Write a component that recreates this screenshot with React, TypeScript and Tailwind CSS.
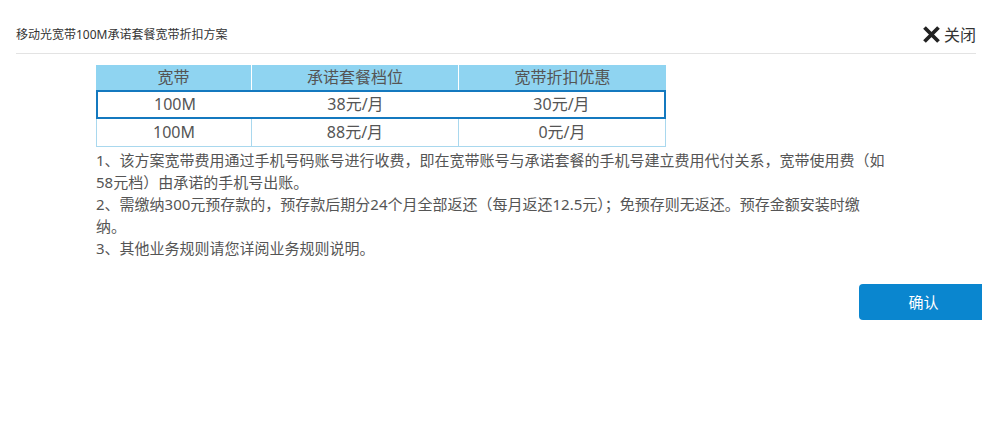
import React from 'react';

const rows = [
  { bw: '100M', level: '38元/月', discount: '30元/月', active: true },
  { bw: '100M', level: '88元/月', discount: '0元/月', active: false },
];

const App = () => {
  return (
    <div className="w-[982px] h-[429px] bg-white overflow-hidden text-[#555] font-['Noto_Sans','Noto_Sans_CJK_SC',sans-serif]">
      {/* header */}
      <div className="ml-[16px] mr-[6px] h-[54px] pt-[16px] flex items-center justify-between border-b border-[#e3e3e3]">
        <span className="text-[12px] leading-[18px] text-[#333]">移动光宽带100M承诺套餐宽带折扣方案</span>
        <button className="flex items-center text-[16px] leading-[20px] text-[#333]">
          <svg width="19" height="19" viewBox="0 0 19 19" className="mr-[3px]">
            <path d="M2.5 2.5 L16.5 16.5 M16.5 2.5 L2.5 16.5" stroke="#222" strokeWidth="3.8" strokeLinecap="butt" />
          </svg>
          关闭
        </button>
      </div>

      {/* table */}
      <div className="ml-[96px] mt-[11px] w-[570px] text-[16px]">
        <div className="flex h-[25px] bg-[#8fd4f1] leading-[25px] text-center">
          <div className="w-[156px] border-r border-white">宽带</div>
          <div className="w-[207px] border-r border-white">承诺套餐档位</div>
          <div className="flex-1">宽带折扣优惠</div>
        </div>
        {rows.map((r) =>
          r.active ? (
            <div key={r.level} className="flex h-[29px] border-2 border-[#1479bf] text-center leading-[25px]">
              <div className="w-[154px]">{r.bw}</div>
              <div className="w-[207px]">{r.level}</div>
              <div className="flex-1">{r.discount}</div>
            </div>
          ) : (
            <div key={r.level} className="flex h-[28px] border-x border-b border-[#a9d8ee] text-center leading-[27px]">
              <div className="w-[155px] border-r border-[#a9d8ee]">{r.bw}</div>
              <div className="w-[207px] border-r border-[#a9d8ee]">{r.level}</div>
              <div className="flex-1">{r.discount}</div>
            </div>
          )
        )}
      </div>

      {/* notes */}
      <div className="ml-[96px] mt-[2px] text-[15px] leading-[22px] text-[#555]">
        <p>
          1、该方案宽带费用通过手机号码账号进行收费，即在宽带账号与承诺套餐的手机号建立费用代付关系，宽带使用费（如
          <br />
          58元档）由承诺的手机号出账。
        </p>
        <p>
          2、需缴纳300元预存款的，预存款后期分24个月全部返还（每月返还12.5元）；免预存则无返还。预存金额安装时缴
          <br />
          纳。
        </p>
        <p>3、其他业务规则请您详阅业务规则说明。</p>
      </div>

      {/* footer */}
      <div className="mt-[25px] flex justify-end">
        <button className="w-[123px] h-[36px] pl-[6px] rounded-l-[4px] bg-[#0a86cf] text-white text-[15px]">确认</button>
      </div>
    </div>
  );
};

export default App;
